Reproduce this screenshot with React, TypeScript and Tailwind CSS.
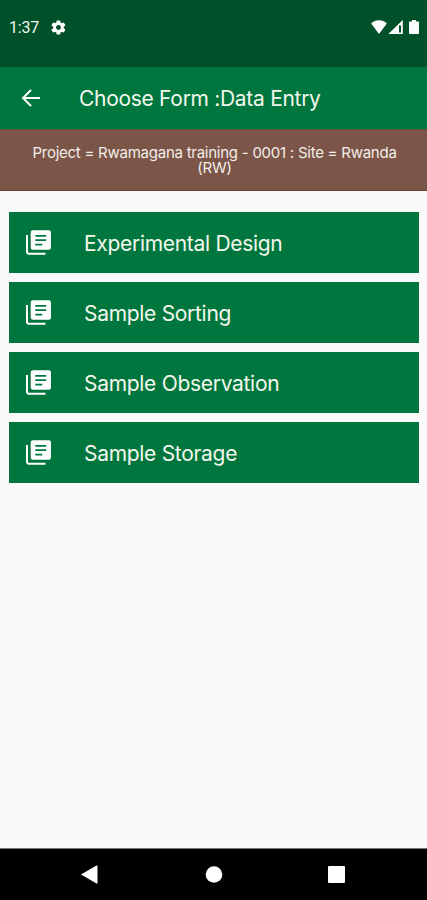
import React from "react";

const forms = ["Experimental Design", "Sample Sorting", "Sample Observation", "Sample Storage"];

function FormIcon() {
  return (
    <svg width="26" height="26" viewBox="0 0 26 26" className="ml-[17px] shrink-0">
      <path d="M1 5v16.700q0 2 2 2h16.500" fill="none" stroke="#fff" strokeWidth="2" />
      <path
        fill="#fff"
        fillRule="evenodd"
        d="M7 .2h15.700a2.300 2.300 0 0 1 2.300 2.300v15a2.300 2.300 0 0 1-2.300 2.300H7a2.300 2.300 0 0 1-2.300-2.300v-15A2.300 2.300 0 0 1 7 .2zM9.300 4.900v1.800h10.900V4.900zM9.300 9.300v1.800h10.900V9.300zM9.300 13.700v1.800h7v-1.800z"
      />
    </svg>
  );
}

export default function App() {
  return (
    <div className="flex h-[900px] w-full flex-col overflow-hidden bg-[#fafafa] font-['Inter',sans-serif] text-[#f3f8ec]">
      <div className="flex h-[67px] shrink-0 items-start bg-[#00502a] pt-[18px]">
        <span className="ml-[9px] w-[41px] font-['Roboto',sans-serif] text-[16px] leading-5 tracking-[-0.2px]">1:37</span>
        <svg width="17" height="17" viewBox="0 0 24 24" className="mt-px" fill="#fff">
          <path d="M19.4 13c.1-.6.1-1.4 0-2l2.2-1.7c.2-.2.3-.4.1-.7l-2-3.4c-.1-.3-.4-.3-.6-.2l-2.6 1c-.5-.4-1.1-.7-1.7-1l-.4-2.6c0-.3-.3-.4-.5-.4h-4c-.3 0-.5.2-.5.4L9 5c-.6.3-1.2.6-1.7 1l-2.5-1c-.3-.1-.5 0-.7.2l-2 3.4c-.1.3-.1.5.2.7L4.500 11c-.1.6-.1 1.400 0 2l-2.200 1.700c-.2.2-.3.4-.2.7l2 3.400c.2.3.4.3.7.2l2.500-1c.5.4 1.100.7 1.700 1l.4 2.600c0 .3.2.4.5.4h4c.2 0 .5-.1.5-.4l.3-2.600c.6-.3 1.200-.6 1.700-1l2.600 1c.2.1.5.1.6-.2l2-3.400c.1-.3.1-.5-.1-.7zM12 15.500a3.500 3.500 0 1 1 0-7 3.500 3.500 0 0 1 0 7z" />
        </svg>
        <svg width="51" height="16" viewBox="0 0 51 16" className="mt-px ml-auto mr-[5px]" fill="#fff">
          <path d="M.2 4.500C4.400.2 11.600.2 15.800 4.500L8 15z" />
          <path fillRule="evenodd" d="M17.300 15 31.800 1v14zM28 6.500v7h2v-7z" />
          <path d="M41 1h4v1.500h2q1 0 1 1V14q0 1-1 1h-8q-1 0-1-1V3.500q0-1 1-1h2z" />
        </svg>
      </div>
      <header className="flex h-[62px] shrink-0 items-center bg-[#00763f]">
        <svg width="20" height="20" viewBox="0 0 20 20" className="ml-[21px] shrink-0" fill="none" stroke="#fff" strokeWidth="2">
          <path d="M19 10H2.500M10 2l-8 8 8 8" />
        </svg>
        <h1 className="ml-[38px] mt-[2px] whitespace-nowrap text-[21px] leading-6 tracking-[-0.3px]">Choose Form :Data Entry</h1>
      </header>
      <div className="h-[62px] shrink-0 border-b border-t border-b-[#6e4630] border-t-[#62543e] bg-[#7a5548] pl-[25px] pr-[23px] pt-[15px] text-center text-[15px] leading-[15px] tracking-[-0.25px] text-[#f5eee9]">
        Project = Rwamagana training - 0001 : Site = Rwanda (RW)
      </div>
      <main className="flex flex-1 flex-col gap-[9px] pl-[9px] pr-2 pt-[21px]">
        {forms.map((name) => (
          <button key={name} className="flex h-[61px] w-full shrink-0 items-center bg-[#00763f] text-left">
            <FormIcon />
            <span className="ml-[32px] mt-[2px] whitespace-nowrap text-[21px] leading-6 tracking-[-0.3px]">{name}</span>
          </button>
        ))}
      </main>
      <nav className="flex h-[52px] shrink-0 items-center border-t border-[#777] bg-black pl-[81px]">
        <svg width="266" height="20" viewBox="0 0 266 20" fill="#fff">
          <path d="M0 9.500 15.500.5q1-.4 1 .6v16.800q0 1-1 .6z" />
          <circle cx="133" cy="9.500" r="8.300" />
          <rect x="247" y="1" width="17" height="17" rx="1" />
        </svg>
      </nav>
    </div>
  );
}
